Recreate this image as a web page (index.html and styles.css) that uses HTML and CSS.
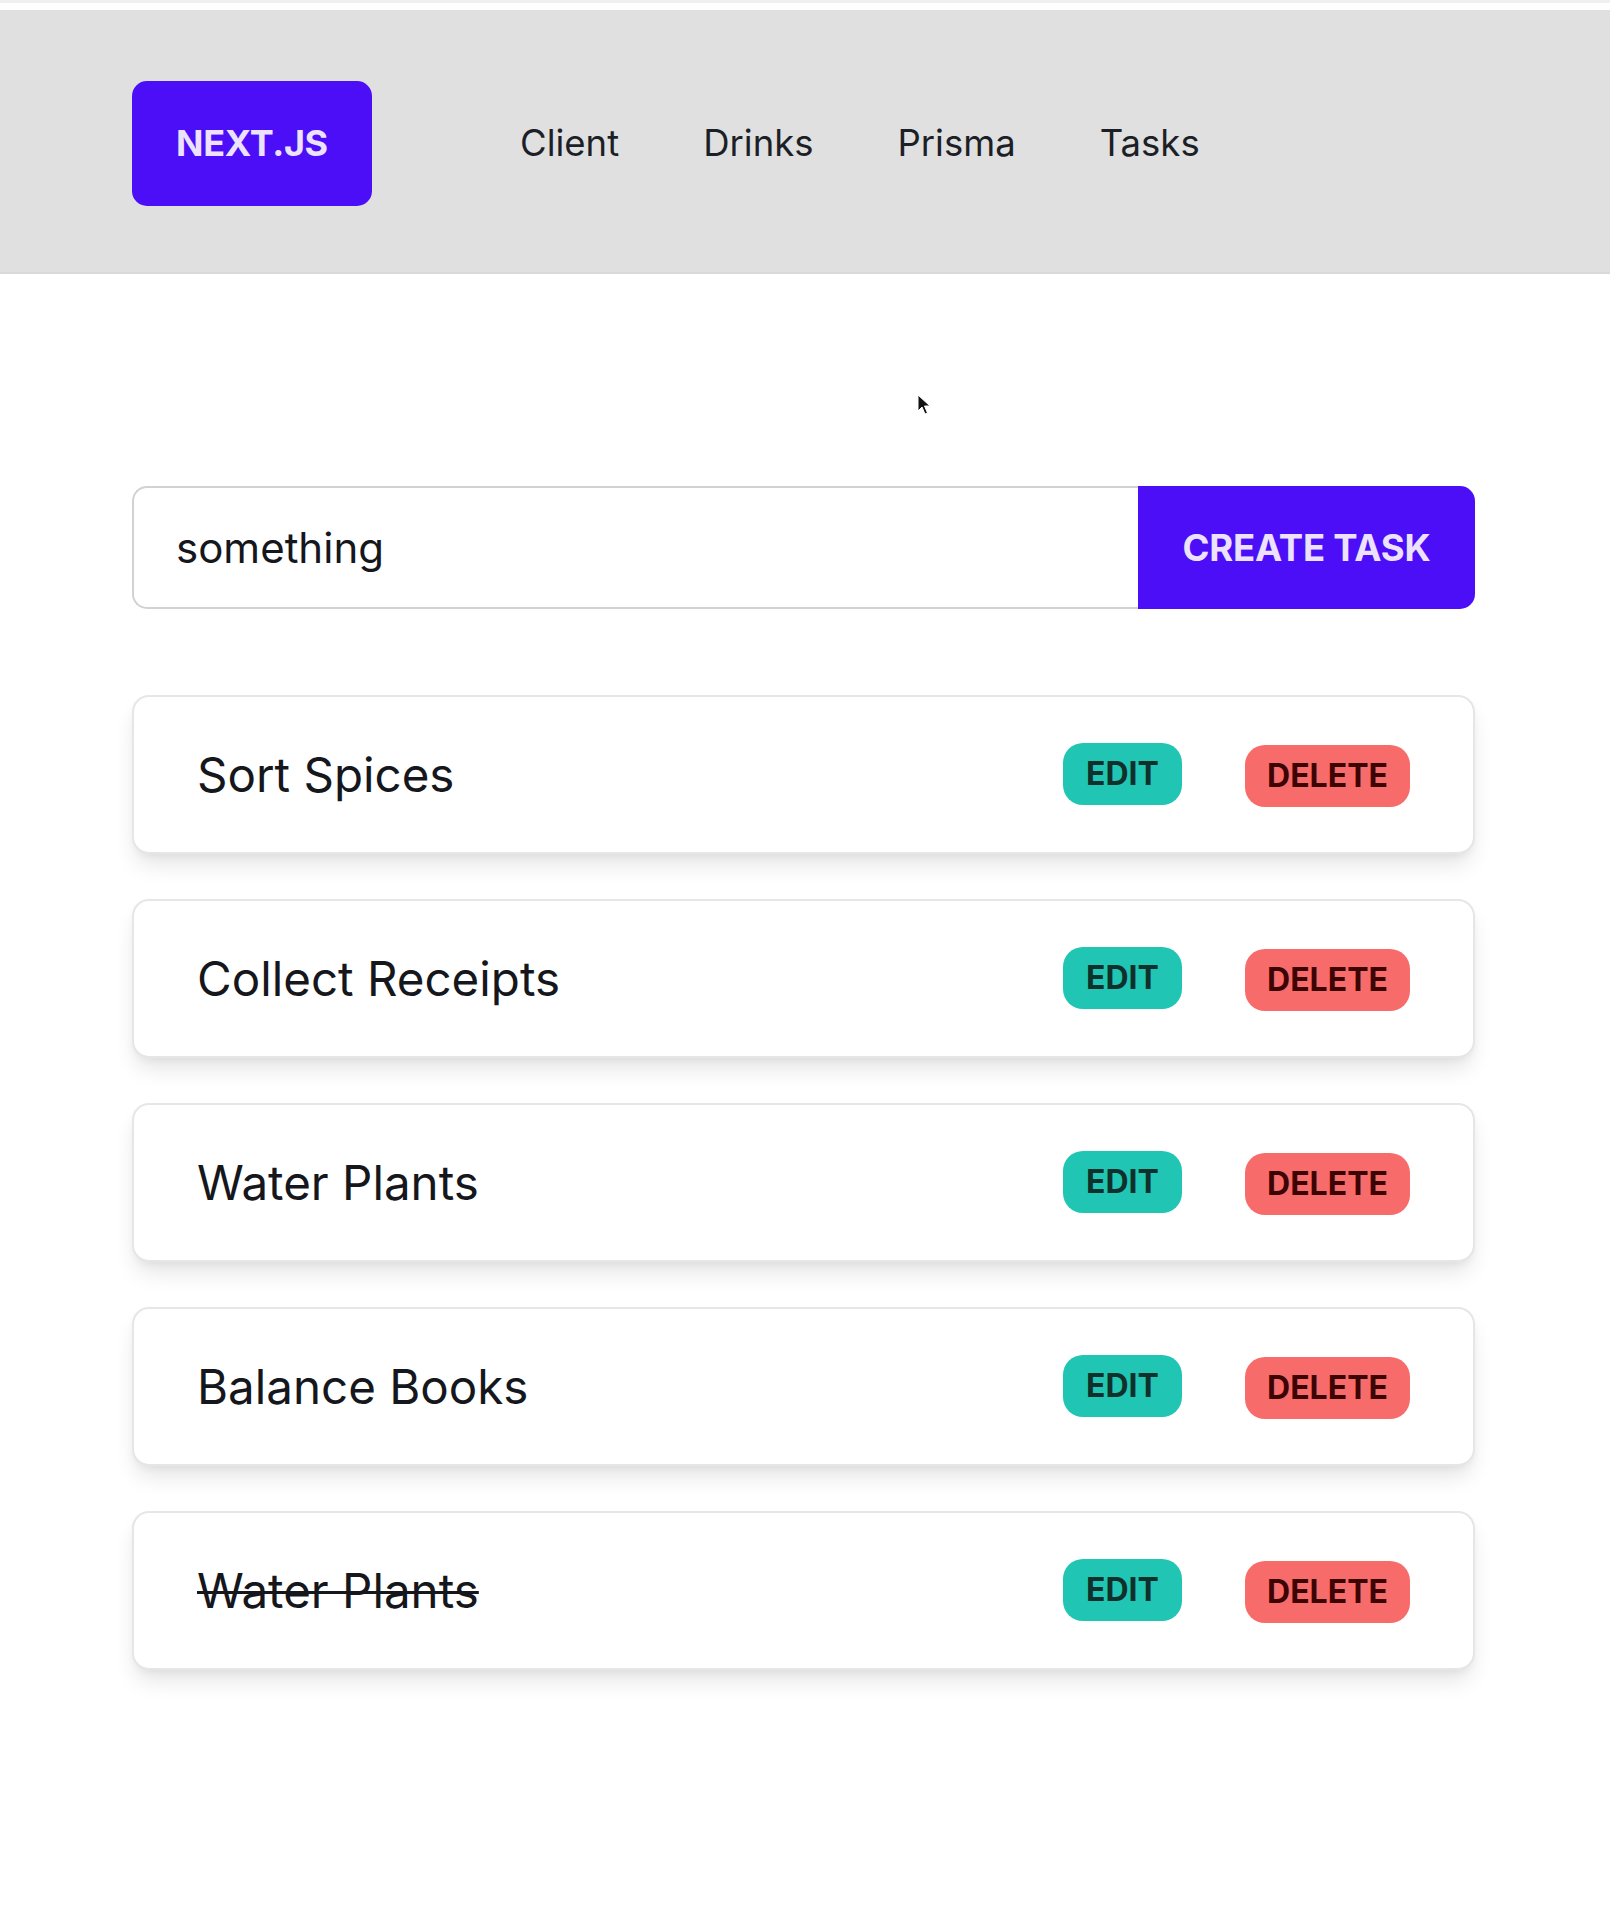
FILE: index.html
```html
<!DOCTYPE html>
<html lang="en">
<head>
<meta charset="utf-8">
<title>Tasks</title>
<link rel="stylesheet" href="styles.css">
</head>
<body>
<div class="topstrip"></div>
<nav class="navbar">
  <a class="logo" href="#">NEXT.JS</a>
  <ul class="links">
    <li><a href="#">Client</a></li>
    <li><a href="#">Drinks</a></li>
    <li><a href="#">Prisma</a></li>
    <li><a href="#">Tasks</a></li>
  </ul>
</nav>
<main class="main">
  <form class="task-form">
    <input class="task-input" type="text" value="something">
    <button class="create-btn" type="button">CREATE TASK</button>
  </form>
  <ul class="task-list">
    <li class="task-card"><span class="task-title">Sort Spices</span><div class="actions"><button class="btn-edit">EDIT</button><button class="btn-delete">DELETE</button></div></li>
    <li class="task-card"><span class="task-title">Collect Receipts</span><div class="actions"><button class="btn-edit">EDIT</button><button class="btn-delete">DELETE</button></div></li>
    <li class="task-card"><span class="task-title">Water Plants</span><div class="actions"><button class="btn-edit">EDIT</button><button class="btn-delete">DELETE</button></div></li>
    <li class="task-card"><span class="task-title">Balance Books</span><div class="actions"><button class="btn-edit">EDIT</button><button class="btn-delete">DELETE</button></div></li>
    <li class="task-card"><span class="task-title done">Water Plants</span><div class="actions"><button class="btn-edit">EDIT</button><button class="btn-delete">DELETE</button></div></li>
  </ul>
</main>
<svg class="cursor" width="14" height="22" viewBox="0 0 14 22" xmlns="http://www.w3.org/2000/svg">
  <path d="M1 1 L1 17 L5 13 L8 20 L10.5 19 L7.5 12 L13 12 Z" fill="#111" stroke="#fff" stroke-width="1"/>
</svg>
</body>
</html>
```

FILE: styles.css
```css
* { box-sizing: border-box; }
html, body { margin: 0; padding: 0; background: #ffffff; }
body {
  font-family: Inter, "Noto Sans", "Liberation Sans", sans-serif;
  color: #1f2430;
  width: 1610px;
  min-height: 1916px;
  position: relative;
}
.topstrip { height: 3px; background: #eff0f1; }
.navbar {
  margin-top: 7px;
  height: 264px;
  background: #e0e0e0;
  border-bottom: 2px solid #d9d9d9;
  display: flex;
  align-items: center;
  padding: 4px 0 0 132px;
}
.logo {
  width: 240px;
  height: 125px;
  border-radius: 15px;
  background: #4b0ef7;
  color: #ece2fd;
  display: flex;
  align-items: center;
  justify-content: center;
  font-size: 36px;
  font-weight: 700;
  text-decoration: none;
  letter-spacing: -0.3px;
}
.links {
  list-style: none;
  margin: 0 0 0 148px;
  padding: 0;
  display: flex;
  gap: 84px;
}
.links a {
  color: #1c1f26;
  text-decoration: none;
  font-size: 36.5px;
  font-weight: 400;
}
.main {
  margin: 212px 0 0 132px;
  width: 1343px;
}
.task-form {
  display: flex;
  height: 123px;
  margin: 0;
}
.task-input {
  flex: 1;
  min-width: 0;
  border: 2px solid #d2d2d2;
  border-right: none;
  border-radius: 15px 0 0 15px;
  padding: 0 0 0 42px;
  font-family: inherit;
  font-size: 42px;
  color: #15171c;
  outline: none;
  background: #fff;
}
.create-btn {
  width: 337px;
  border: none;
  border-radius: 0 15px 15px 0;
  background: #4b0ef7;
  color: #ece2fd;
  font-family: inherit;
  font-size: 36.5px;
  font-weight: 700;
  letter-spacing: -0.2px;
}
.task-list {
  list-style: none;
  margin: 86px 0 0 0;
  padding: 0;
  display: flex;
  flex-direction: column;
  gap: 45px;
}
.task-card {
  height: 159px;
  border: 2px solid #e6e6e6;
  border-radius: 17px;
  background: #fff;
  box-shadow: 0 14px 22px -4px rgba(0,0,0,0.11), 0 4px 8px -2px rgba(0,0,0,0.05);
  display: flex;
  align-items: center;
  justify-content: space-between;
  padding: 0 63px 0 63px;
}
.task-title {
  font-size: 47.5px;
  font-weight: 400;
  color: #15171c;
}
.task-title.done { text-decoration: line-through; text-decoration-thickness: 3px; }
.actions {
  display: flex;
  align-items: center;
  gap: 63px;
}
.btn-edit, .btn-delete {
  border: none;
  font-family: inherit;
  font-size: 32px;
  font-weight: 700;
  border-radius: 20px;
  padding: 0;
}
.btn-edit {
  width: 119px;
  height: 62px;
  background: #20c6b3;
  color: #10302c;
  margin-top: -2px;
}
.btn-delete {
  width: 165px;
  height: 62px;
  background: #f76b6b;
  color: #3d0404;
  margin-top: 2px;
}
.cursor {
  position: absolute;
  left: 917px;
  top: 394px;
}
```
